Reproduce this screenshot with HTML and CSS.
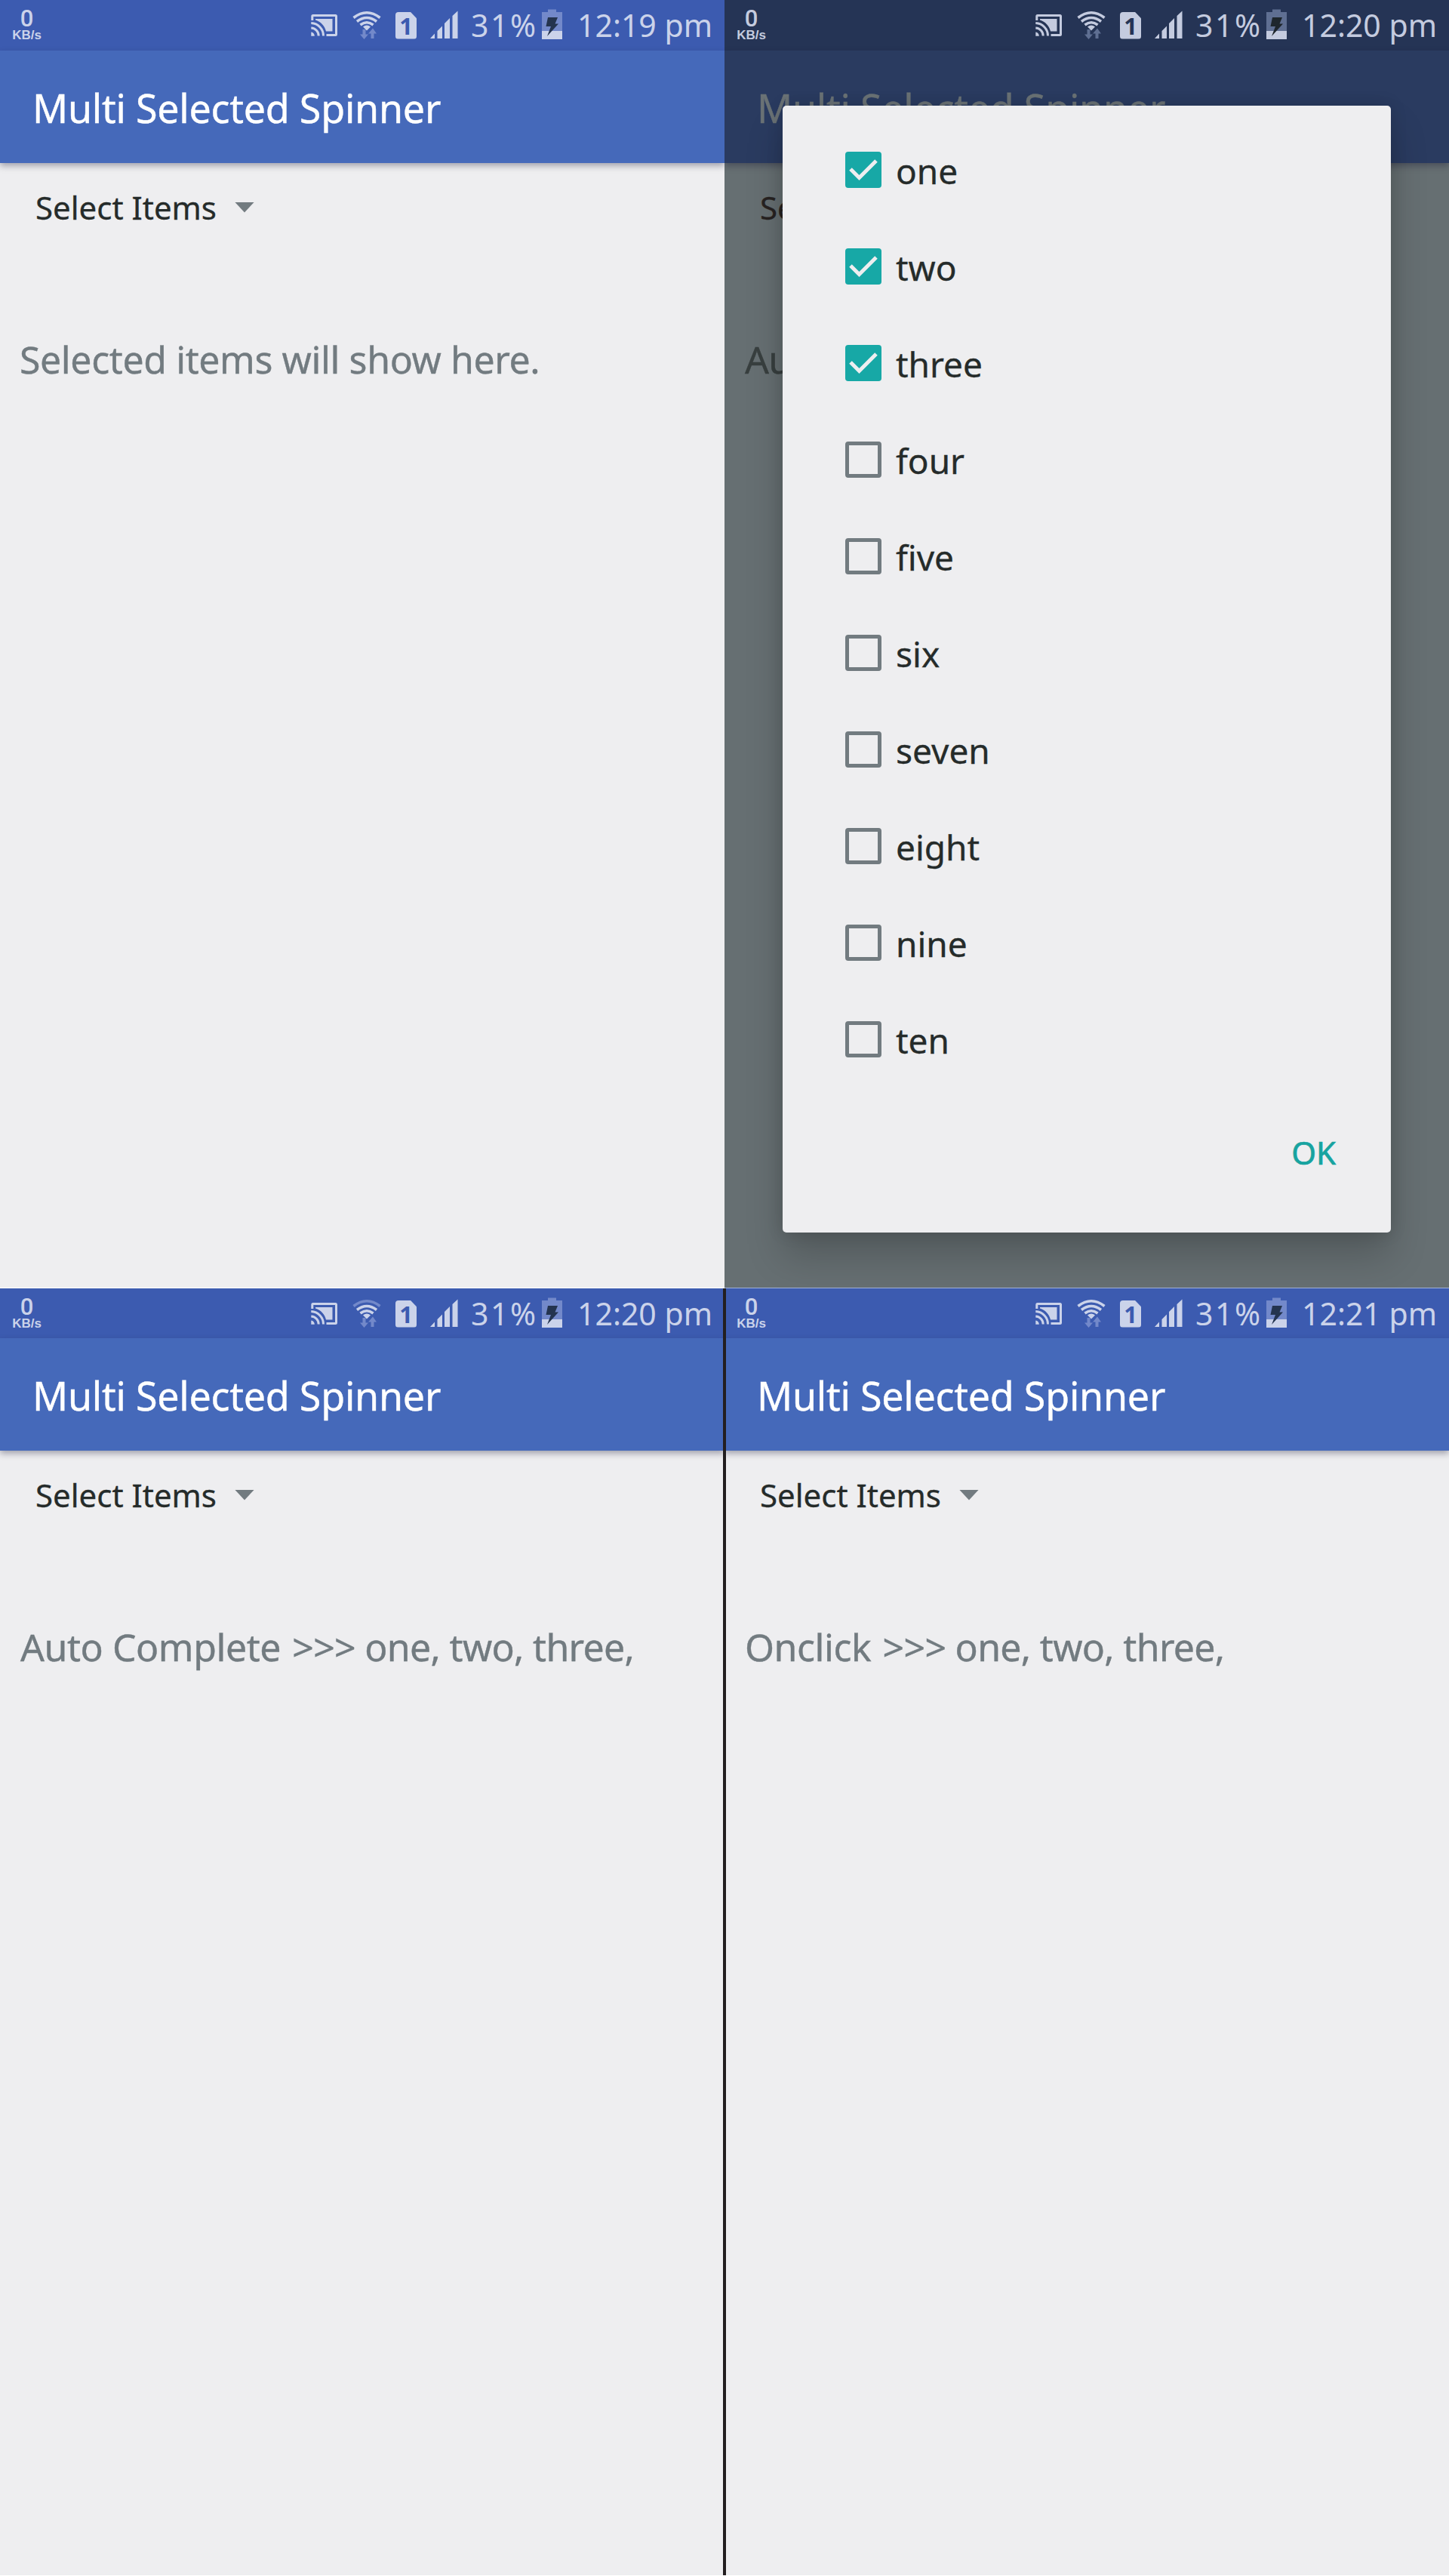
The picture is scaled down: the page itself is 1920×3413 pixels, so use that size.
FILE: index.html
```
<!DOCTYPE html>
<html lang="en">
<head>
<meta charset="utf-8">
<title>Multi Selected Spinner</title>
<link rel="stylesheet" href="styles.css">
</head>
<body>
<svg class="defs" width="0" height="0" aria-hidden="true">
  <symbol id="cast" viewBox="0 0 36 67">
    <g fill="none" stroke="currentColor" stroke-width="3">
      <path d="M1.8 27V21.5Q1.8 20.5 2.8 20.5H32.500Q33.500 20.500 33.500 21.500V45.500Q33.500 46.500 32.500 46.500H20.500"/>
      <path d="M0.300 30.500A17 17 0 0 1 16.500 47.500M0.300 37A10.500 10.500 0 0 1 10.200 47.500"/>
    </g>
    <path fill="currentColor" d="M6 25H28.500V41.500H20C18.500 34.500 13 28.500 6 26.500ZM0.300 42.500A5 5 0 0 1 4.800 47.700H0.300Z"/>
  </symbol>
  <symbol id="wifi" viewBox="0 0 38 67">
    <g fill="none" stroke="currentColor" stroke-width="3.600">
      <path class="wifi-outer" d="M1.500 23.500Q19 10 36.500 23.500"/>
      <path d="M6 28.500Q19 18.500 32 28.500M10.500 33Q19 26.500 27.500 33"/>
    </g>
    <path fill="currentColor" d="M14 35.500Q19 31.500 24 35.500L19 40.500Z"/>
    <path class="faint" d="M13.500 39H17.500V45.500H21L15.500 52L10 45.500H13.500ZM24.500 51V44.500H21L27 37.500L32 44.500H28.500V51Z"/>
  </symbol>
  <symbol id="signal" viewBox="0 0 38 67">
    <path fill="currentColor" d="M0 51L6 44.500V51ZM9.500 51V41L16 34.500V51ZM19 51V31L26 24V51ZM29.500 51V21L36.500 14.500V51Z"/>
  </symbol>
  <symbol id="battery" viewBox="0 0 28 67">
    <path class="faint" d="M0 16H8V12.500H19V16H27V52H0Z"/>
    <path fill="currentColor" d="M0 41H27V52H0Z"/>
    <path class="bolt" d="M8 23H21L17.500 31.500H22L7 48L12 35H5.500Z"/>
  </symbol>
</svg>

<main class="board">
  <section class="phone">
    <header class="status">
      <div class="speed"><b>0</b><span>KB/s</span></div>
      <div class="indicators">
        <svg class="cast"><use href="#cast"/></svg>
        <svg class="wifi"><use href="#wifi"/></svg>
        <span class="sim">1</span>
        <svg class="signal"><use href="#signal"/></svg>
        <span class="percent">31%</span>
        <svg class="battery"><use href="#battery"/></svg>
        <time>12:19 pm</time>
      </div>
    </header>
    <h1 class="appbar">Multi Selected Spinner</h1>
    <div class="spinner">Select Items<i class="arrow"></i></div>
    <p class="message wide">Selected items will show here.</p>
  </section>

  <section class="phone dimmed">
    <header class="status">
      <div class="speed"><b>0</b><span>KB/s</span></div>
      <div class="indicators">
        <svg class="cast"><use href="#cast"/></svg>
        <svg class="wifi"><use href="#wifi"/></svg>
        <span class="sim">1</span>
        <svg class="signal"><use href="#signal"/></svg>
        <span class="percent">31%</span>
        <svg class="battery"><use href="#battery"/></svg>
        <time>12:20 pm</time>
      </div>
    </header>
    <h1 class="appbar">Multi Selected Spinner</h1>
    <div class="spinner">Se</div>
    <p class="message">Au</p>
    <div class="dialog">
      <ul class="options">
        <li><i class="box checked"><svg viewBox="0 0 48 48"><path d="M7 23L18.500 34.500L41 12"/></svg></i><span>one</span></li>
        <li><i class="box checked"><svg viewBox="0 0 48 48"><path d="M7 23L18.500 34.500L41 12"/></svg></i><span>two</span></li>
        <li><i class="box checked"><svg viewBox="0 0 48 48"><path d="M7 23L18.500 34.500L41 12"/></svg></i><span>three</span></li>
        <li><i class="box"></i><span>four</span></li>
        <li><i class="box"></i><span>five</span></li>
        <li><i class="box"></i><span>six</span></li>
        <li><i class="box"></i><span>seven</span></li>
        <li><i class="box"></i><span>eight</span></li>
        <li><i class="box"></i><span>nine</span></li>
        <li><i class="box"></i><span>ten</span></li>
      </ul>
      <div class="actions">OK</div>
    </div>
  </section>

  <section class="phone lower weak">
    <header class="status">
      <div class="speed"><b>0</b><span>KB/s</span></div>
      <div class="indicators">
        <svg class="cast"><use href="#cast"/></svg>
        <svg class="wifi"><use href="#wifi"/></svg>
        <span class="sim">1</span>
        <svg class="signal"><use href="#signal"/></svg>
        <span class="percent">31%</span>
        <svg class="battery"><use href="#battery"/></svg>
        <time>12:20 pm</time>
      </div>
    </header>
    <h1 class="appbar">Multi Selected Spinner</h1>
    <div class="spinner">Select Items<i class="arrow"></i></div>
    <p class="message"><span class="event">Auto Complete</span> &gt;&gt;&gt; one, two, three,</p>
  </section>

  <section class="phone lower blended">
    <header class="status">
      <div class="speed"><b>0</b><span>KB/s</span></div>
      <div class="indicators">
        <svg class="cast"><use href="#cast"/></svg>
        <svg class="wifi"><use href="#wifi"/></svg>
        <span class="sim">1</span>
        <svg class="signal"><use href="#signal"/></svg>
        <span class="percent">31%</span>
        <svg class="battery"><use href="#battery"/></svg>
        <time>12:21 pm</time>
      </div>
    </header>
    <h1 class="appbar">Multi Selected Spinner</h1>
    <div class="spinner">Select Items<i class="arrow"></i></div>
    <p class="message"><span class="event">Onclick</span> &gt;&gt;&gt; one, two, three,</p>
  </section>
  <div class="divider"></div>
</main>
</body>
</html>
```

FILE: styles.css
```
* { box-sizing: border-box; margin: 0; padding: 0; }

body {
  width: 1920px;
  height: 3413px;
  background: #fff;
  font-family: "Noto Sans", "Open Sans", sans-serif;
  overflow: hidden;
}

.defs { display: block; position: absolute; }

.board {
  position: relative;
  display: grid;
  grid-template-columns: 960px 960px;
  grid-template-rows: 1706px 1706px;
}

.phone {
  --status: #3c5bb0;
  --bar: #4569ba;
  --page: #eeeef0;
  --title: #fff;
  --text: #252b2a;
  --muted: #727b80;
  --icon: #cbd3ea;
  --faint: #7389ca;
  --bolt: #24344f;
  position: relative;
  overflow: hidden;
  background: var(--page);
  white-space: nowrap;
}

.dimmed {
  --status: #253455;
  --bar: #2a3b60;
  --page: #666f72;
  --title: #6a7275;
  --text: #272221;
  --muted: #383f3f;
  --icon: #c4cbdf;
  --faint: #5f6f92;
  --bolt: #1e262c;
}

.status {
  height: 67px;
  background: var(--status);
  color: var(--icon);
  display: flex;
  justify-content: space-between;
}

.lower .status { border-top: 1px solid #fff; }
.blended .status { border-top-color: #9fb0d8; }

.speed {
  width: 71px;
  padding-top: 12px;
  display: flex;
  flex-direction: column;
  align-items: center;
}
.speed b { font: 500 31px/26px Roboto, sans-serif; }
.speed span { font: bold 17px/18px "Liberation Sans", sans-serif; }

.indicators {
  height: 67px;
  padding-right: 18px;
  display: flex;
  align-items: center;
}
.indicators svg { display: block; height: 67px; flex: none; }
.cast { width: 36px; margin-right: 19px; }
.wifi { width: 38px; margin-right: 19px; }
.signal { width: 38px; margin-right: 16px; }
.battery { width: 28px; }

.faint { fill: var(--faint); }
.bolt { fill: var(--bolt); }
.weak .wifi { --outer: #7389ca; }
.wifi-outer { stroke: var(--outer, currentColor); }

.sim {
  width: 28px;
  height: 36px;
  margin-right: 18px;
  border-radius: 4px;
  background: var(--icon);
  clip-path: polygon(0 0, 70% 0, 100% 24%, 100% 100%, 0 100%);
  color: var(--status);
  font: bold 31px/36px "Noto Sans", sans-serif;
  text-align: center;
}

.percent { width: 94px; font-size: 41px; line-height: 67px; letter-spacing: 2.500px; }
.status time { width: 177px; margin-left: 19px; font-size: 41px; line-height: 67px; }

.appbar {
  position: relative;
  height: 149px;
  padding: 3px 0 0 43px;
  background: var(--bar);
  box-shadow: 0 4px 8px rgba(20, 20, 50, .34);
  color: var(--title);
  font-size: 52px;
  font-weight: 400;
  line-height: 146px;
  letter-spacing: -.25px;
  -webkit-text-stroke: .4px;
}

.spinner {
  height: 117px;
  padding-left: 47px;
  display: flex;
  align-items: center;
  gap: 24px;
  color: var(--text);
  font-size: 42px;
  line-height: 117px;
  -webkit-text-stroke: .3px;
}
.arrow {
  width: 26px;
  height: 14px;
  background: var(--muted);
  clip-path: polygon(0 0, 100% 0, 50% 100%);
}

.message {
  padding: 1px 0 0 27px;
  color: var(--muted);
  font-size: 50px;
  line-height: 285px;
  letter-spacing: -.7px;
  -webkit-text-stroke: .4px;
}
.message.wide { padding-left: 26px; letter-spacing: -.4px; }
.event { margin-right: 3px; letter-spacing: -.45px; }

.dialog {
  position: absolute;
  left: 77px;
  top: 140px;
  width: 806px;
  height: 1493px;
  padding-top: 21px;
  border-radius: 5px;
  background: #eeeef0;
  box-shadow: 0 32px 50px rgba(0, 0, 0, .19), 0 0 22px rgba(0, 0, 0, .14);
}
.options { list-style: none; }
.options li {
  height: 128px;
  padding-left: 83px;
  display: flex;
  align-items: center;
  color: #252b2a;
  font-size: 46px;
  line-height: 60px;
  -webkit-text-stroke: .3px;
}
.options span { padding: 1px 0 0 19px; }
.box {
  width: 48px;
  height: 48px;
  border: 5px solid #727b80;
  border-radius: 4px;
}
.box.checked { border: 0; background: #17a8a6; }
.box svg { display: block; }
.box path { fill: none; stroke: #eeeef0; stroke-width: 5; }

.actions {
  padding: 56px 73px 0 0;
  color: #17a3a0;
  font-size: 42px;
  line-height: 60px;
  text-align: right;
  -webkit-text-stroke: .7px;
}

.divider {
  position: absolute;
  left: 957.500px;
  top: 1707px;
  width: 4.500px;
  height: 1705px;
  background: #231f20;
}
```
